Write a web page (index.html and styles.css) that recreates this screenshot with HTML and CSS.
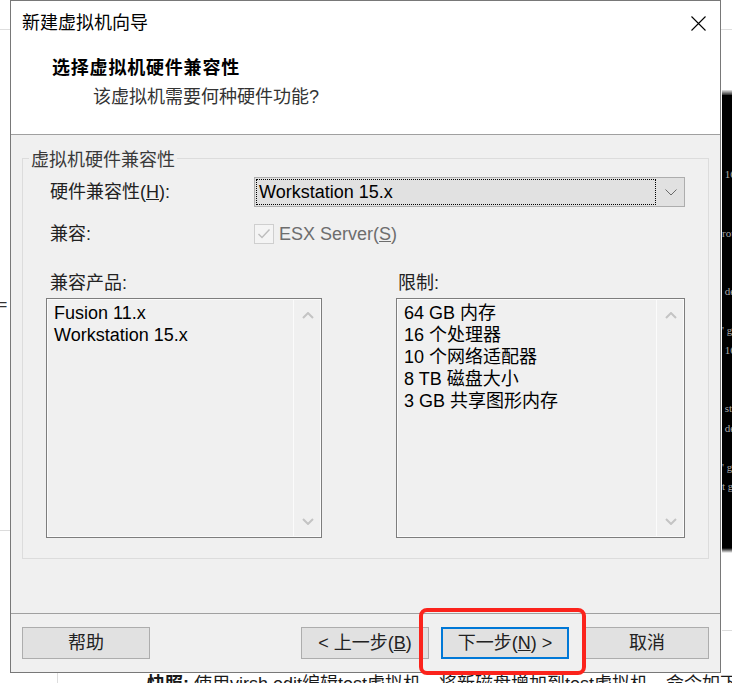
FILE: index.html
```html
<!DOCTYPE html>
<html lang="zh-CN">
<head>
<meta charset="utf-8">
<title>新建虚拟机向导</title>
<link rel="stylesheet" href="styles.css">
</head>
<body>
<div class="page">
  <div class="bg-top"></div>
  <div class="bg-left"><span class="eq">=</span><div class="bg-left-rule"></div></div>
  <div class="bg-center"></div>
  <div class="bg-right">
    <div class="term-edge"></div>
    <pre class="term"> 16


rou


 de

' g
 16


 st
 de

' g
t g</pre>
    <div class="term-fade"></div>
    <div class="bg-right-rule"></div>
  </div>
  <div class="bg-bottom">
    <div class="side"></div>
    <p class="note"><b>快照:</b> 使用virsh edit编辑test虚拟机，将新磁盘增加到test虚拟机，命令如下</p>
  </div>

  <div class="dialog">
    <div class="header">
      <div class="titlebar">
        <span class="title">新建虚拟机向导</span>
        <svg class="close" width="15" height="15" viewBox="0 0 15 15"><path d="M0.5 0.5 L14.5 14.5 M14.5 0.5 L0.5 14.5" stroke="#000" stroke-width="1.1" fill="none"/></svg>
      </div>
      <div class="heading">选择虚拟机硬件兼容性</div>
      <div class="subtitle">该虚拟机需要何种硬件功能?</div>
    </div>

    <div class="content">
      <div class="group">
        <div class="legend">虚拟机硬件兼容性</div>
        <div class="group-body">
          <div class="row1">
            <span class="lbl">硬件兼容性(<u>H</u>):</span>
            <div class="combo">
              <div class="focus">Workstation 15.x</div>
              <div class="arrow"><svg width="12" height="7" viewBox="0 0 12 7"><polyline points="0.5,0.5 6,6 11.5,0.5" fill="none" stroke="#6a6a6a" stroke-width="1"/></svg></div>
            </div>
          </div>
          <div class="row2">
            <span class="lbl">兼容:</span>
            <div class="check">
              <span class="box"><svg width="18" height="18" viewBox="0 0 18 18"><polyline points="3.5,9 7,12.5 14.5,4.5" fill="none" stroke="#bdbdbd" stroke-width="1.4"/></svg></span>
              <span>ESX Server(<u>S</u>)</span>
            </div>
          </div>
          <div class="row3">
            <div class="col">
              <div class="col-lbl left">兼容产品:</div>
              <div class="list">
                <div class="items">
                  <div>Fusion 11.x</div>
                  <div>Workstation 15.x</div>
                </div>
                <div class="scroll">
                  <svg width="12" height="7" viewBox="0 0 12 7"><polyline points="1,6 6,1 11,6" fill="none" stroke="#c4c4c4" stroke-width="2"/></svg>
                  <svg width="12" height="7" viewBox="0 0 12 7"><polyline points="1,1 6,6 11,1" fill="none" stroke="#c4c4c4" stroke-width="2"/></svg>
                </div>
              </div>
            </div>
            <div class="col">
              <div class="col-lbl right">限制:</div>
              <div class="list">
                <div class="items">
                  <div>64 GB 内存</div>
                  <div>16 个处理器</div>
                  <div>10 个网络适配器</div>
                  <div>8 TB 磁盘大小</div>
                  <div>3 GB 共享图形内存</div>
                </div>
                <div class="scroll">
                  <svg width="12" height="7" viewBox="0 0 12 7"><polyline points="1,6 6,1 11,6" fill="none" stroke="#c4c4c4" stroke-width="2"/></svg>
                  <svg width="12" height="7" viewBox="0 0 12 7"><polyline points="1,1 6,6 11,1" fill="none" stroke="#c4c4c4" stroke-width="2"/></svg>
                </div>
              </div>
            </div>
          </div>
        </div>
      </div>
    </div>

    <div class="footer">
      <div class="btn help">帮助</div>
      <div class="btn back">&lt; 上一步(<u>B</u>)</div>
      <div class="btn next">下一步(<u>N</u>) &gt;</div>
      <div class="btn cancel">取消</div>
    </div>
  </div>

  <div class="callout"></div>
</div>
</body>
</html>
```

FILE: styles.css
```css
html, body {
  margin: 0;
  padding: 0;
  background: #fff;
}

.page {
  position: relative;
  width: 732px;
  height: 683px;
  overflow: hidden;
  display: grid;
  grid-template-columns: 10px 711px 11px;
  grid-template-rows: 30px 643px 10px;
  font-family: "Liberation Sans", "Noto Sans CJK SC", sans-serif;
}

/* background application behind the dialog */
.bg-top {
  grid-column: 1 / 4;
  grid-row: 1;
  border-bottom: 1px solid #dedede;
  box-sizing: border-box;
}

.bg-left {
  grid-column: 1;
  grid-row: 2;
  padding-top: 268px;
  box-sizing: border-box;
}

.eq {
  display: block;
  font-size: 14px;
  line-height: 14px;
  color: #333;
  margin-left: -1px;
}

.bg-left-rule {
  height: 218px;
  border-bottom: 1px solid #dcdcdc;
}

.bg-right {
  grid-column: 3;
  grid-row: 2;
  padding-top: 60px;
  box-sizing: border-box;
  padding-left: 1px;
}

.term-edge {
  height: 5px;
  background: linear-gradient(#e6e6e6, #2a2a2a);
}

.term {
  margin: 0;
  height: 453px;
  box-sizing: border-box;
  background: #000;
  padding-top: 70px;
  font-family: "Liberation Serif", serif;
  font-size: 11px;
  line-height: 19.5px;
  color: #a8a8a8;
  overflow: hidden;
  white-space: pre;
}

.term-fade {
  height: 5px;
  background: linear-gradient(#000, #fff);
}

.bg-right-rule {
  margin-top: 77px;
  border-top: 1px solid #dcdcdc;
}

.bg-bottom {
  grid-column: 1 / 4;
  grid-row: 3;
  display: flex;
  align-items: flex-start;
}

.side {
  width: 58px;
  height: 10px;
  box-sizing: border-box;
  border-right: 1px solid #dedede;
  flex: none;
}

.note {
  margin: 0 0 0 89px;
  font-size: 18px;
  line-height: 22px;
  white-space: nowrap;
  color: #1a1a1a;
}

/* dialog window */
.dialog {
  position: absolute;
  left: 10px;
  top: 0;
  width: 711px;
  height: 673px;
  box-sizing: border-box;
  border: 1px solid #787878;
  background: #f0f0f0;
  display: flex;
  flex-direction: column;
  color: #1a1a1a;
  font-size: 18px;
}

.header {
  height: 134px;
  box-sizing: border-box;
  background: #fff;
  border-bottom: 1px solid #a0a0a0;
  flex: none;
}

.titlebar {
  height: 44px;
  display: flex;
  align-items: center;
  padding: 0 14px 0 11px;
}

.title {
  font-size: 18px;
  line-height: 24px;
  color: #000;
}

.close {
  margin-left: auto;
  display: block;
}

.heading {
  margin: 11px 0 0 41px;
  font-weight: bold;
  line-height: 24px;
  letter-spacing: 0.8px;
  color: #000;
}

.subtitle {
  margin: 5px 0 0 82px;
  line-height: 24px;
  color: #333;
}

.content {
  flex: 1;
  padding: 23px 11px 0;
}

.group {
  height: 401px;
  box-sizing: border-box;
  border: 1px solid #dcdcdc;
}

.legend {
  width: fit-content;
  margin: -10px 0 -12px 6px;
  padding: 0 2px;
  background: #f0f0f0;
  line-height: 22px;
  color: #3a3a3a;
}

.group-body {
  padding: 18px 23px 20px;
}

.row1 {
  display: grid;
  grid-template-columns: 208px 431px;
  height: 30px;
  align-items: center;
}

.lbl {
  padding-left: 4px;
  line-height: 22px;
  color: #222;
}

.combo {
  height: 30px;
  box-sizing: border-box;
  border: 1px solid #adadad;
  background: #e1e1e1;
  display: flex;
}

.focus {
  margin: 1px;
  width: 400px;
  box-sizing: border-box;
  border: 1px dotted #000;
  padding-left: 2px;
  line-height: 24px;
  color: #000;
}

.arrow {
  flex: 1;
  display: flex;
  align-items: center;
  justify-content: center;
}

.row2 {
  margin-top: 16px;
  display: grid;
  grid-template-columns: 208px auto;
  height: 20px;
  align-items: center;
}

.check {
  display: flex;
  align-items: center;
  gap: 5px;
  color: #6d6d6d;
  line-height: 22px;
}

.box {
  width: 20px;
  height: 20px;
  box-sizing: border-box;
  border: 1px solid #cfcfcf;
  background: #f4f4f4;
  display: flex;
  align-items: center;
  justify-content: center;
}

.row3 {
  margin-top: 29px;
  display: grid;
  grid-template-columns: 276px 289px;
  column-gap: 74px;
}

.col-lbl {
  line-height: 22px;
  margin-bottom: 4px;
  color: #222;
}

.col-lbl.left {
  padding-left: 4px;
}

.col-lbl.right {
  padding-left: 2px;
}

.list {
  height: 240px;
  box-sizing: border-box;
  border: 1px solid #7d7d7d;
  box-shadow: inset 0 0 0 1px #fbfbfb;
  background: #f0f0f0;
  display: flex;
}

.items {
  flex: 1;
  padding: 3px 7px;
  line-height: 22px;
  color: #000;
}

.scroll {
  width: 27px;
  flex: none;
  border-left: 1px solid #fbfbfb;
  display: flex;
  flex-direction: column;
  justify-content: space-between;
  align-items: center;
  padding: 13px 0 12px;
}

.scroll svg {
  display: block;
}

.footer {
  height: 59px;
  flex: none;
  box-sizing: border-box;
  border-top: 1px solid #a0a0a0;
  display: flex;
  align-items: center;
  padding: 0 11px;
}

.btn {
  height: 32px;
  box-sizing: border-box;
  border: 1px solid #adadad;
  background: #e1e1e1;
  display: flex;
  align-items: center;
  justify-content: center;
  width: 128px;
  color: #222;
  line-height: 22px;
  white-space: pre;
}

.help {
  margin-right: auto;
}

.back {
  margin-right: 12px;
}

.next {
  border: 2px solid #0078d7;
  margin-right: 16px;
}

.cancel {
  width: 124px;
}

.callout {
  position: absolute;
  left: 419px;
  top: 608px;
  width: 167px;
  height: 67px;
  box-sizing: border-box;
  border: 4px solid #fb231c;
  border-radius: 8px;
}
```
